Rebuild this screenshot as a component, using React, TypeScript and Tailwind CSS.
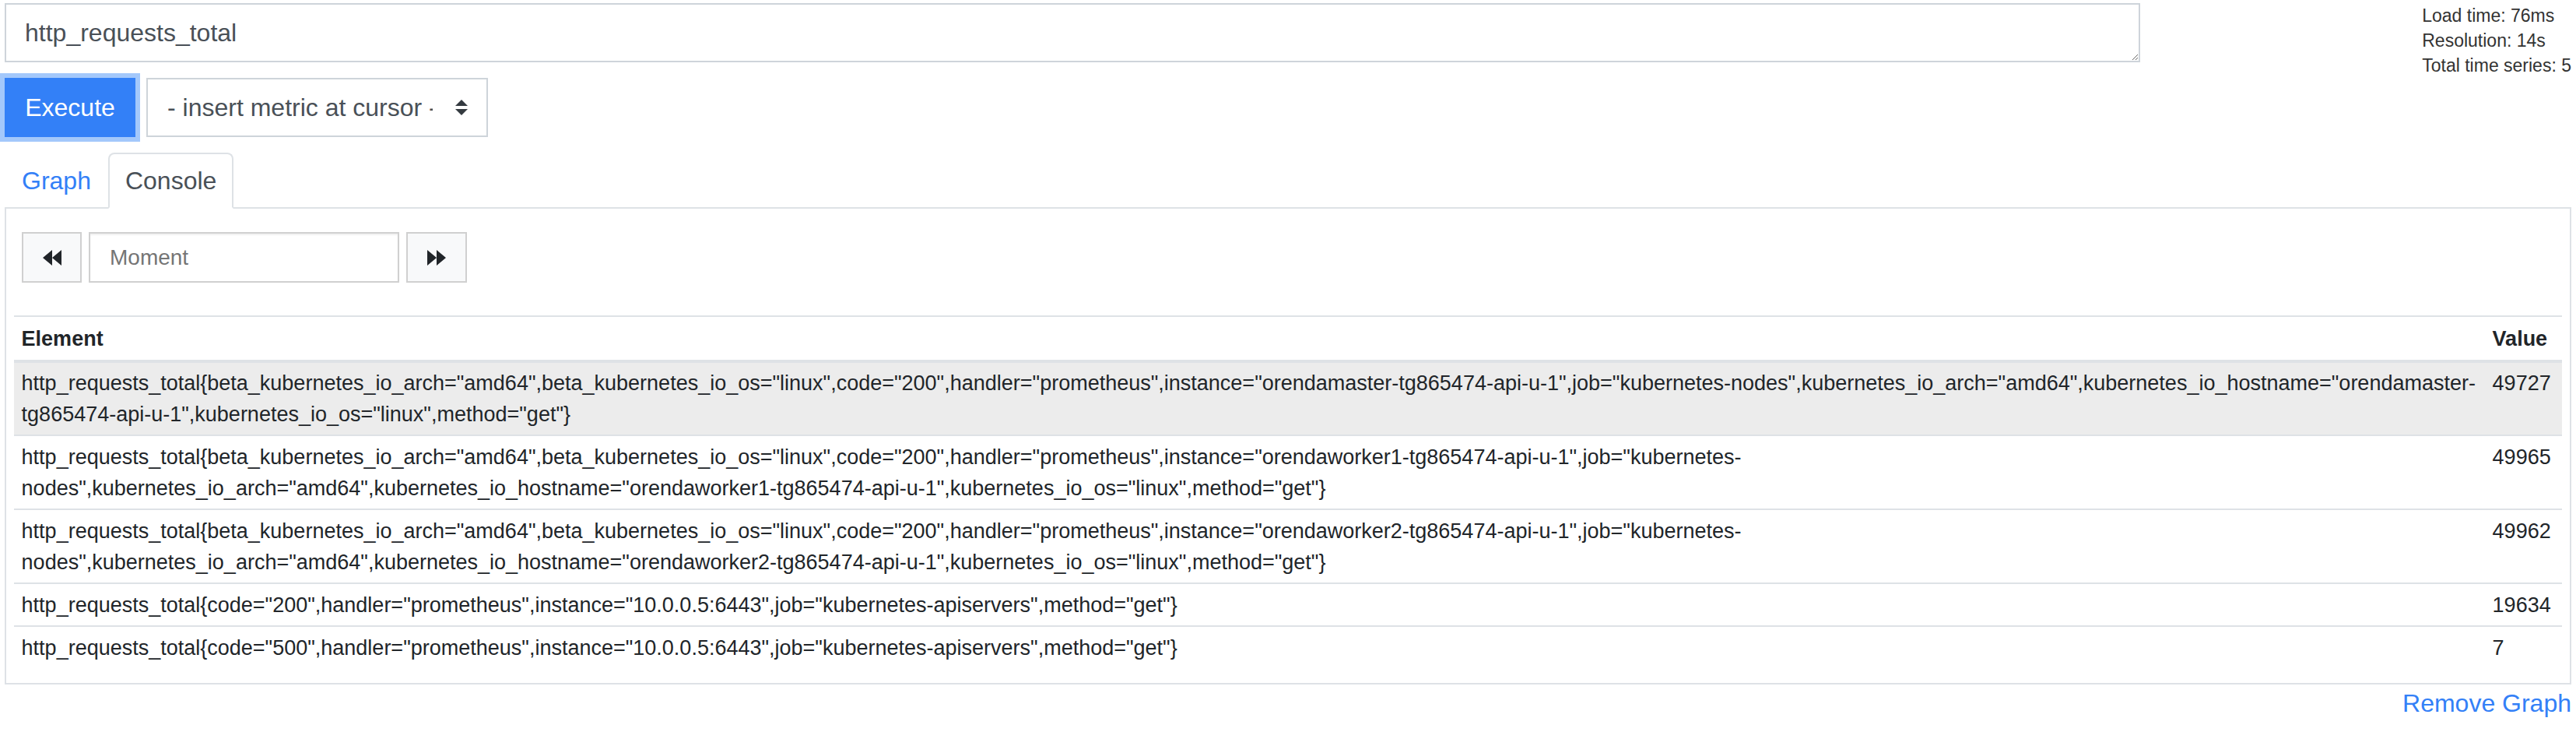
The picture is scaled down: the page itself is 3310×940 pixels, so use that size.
import React from 'react';

type Row = { lines: string[]; value: string; active?: boolean };

const rows: Row[] = [
  {
    lines: [
      'http_requests_total{beta_kubernetes_io_arch="amd64",beta_kubernetes_io_os="linux",code="200",handler="prometheus",instance="orendamaster-tg865474-api-u-1",job="kubernetes-nodes",kubernetes_io_arch="amd64",kubernetes_io_hostname="orendamaster-',
      'tg865474-api-u-1",kubernetes_io_os="linux",method="get"}',
    ],
    value: '49727',
    active: true,
  },
  {
    lines: [
      'http_requests_total{beta_kubernetes_io_arch="amd64",beta_kubernetes_io_os="linux",code="200",handler="prometheus",instance="orendaworker1-tg865474-api-u-1",job="kubernetes-',
      'nodes",kubernetes_io_arch="amd64",kubernetes_io_hostname="orendaworker1-tg865474-api-u-1",kubernetes_io_os="linux",method="get"}',
    ],
    value: '49965',
  },
  {
    lines: [
      'http_requests_total{beta_kubernetes_io_arch="amd64",beta_kubernetes_io_os="linux",code="200",handler="prometheus",instance="orendaworker2-tg865474-api-u-1",job="kubernetes-',
      'nodes",kubernetes_io_arch="amd64",kubernetes_io_hostname="orendaworker2-tg865474-api-u-1",kubernetes_io_os="linux",method="get"}',
    ],
    value: '49962',
  },
  {
    lines: ['http_requests_total{code="200",handler="prometheus",instance="10.0.0.5:6443",job="kubernetes-apiservers",method="get"}'],
    value: '19634',
  },
  {
    lines: ['http_requests_total{code="500",handler="prometheus",instance="10.0.0.5:6443",job="kubernetes-apiservers",method="get"}'],
    value: '7',
  },
];

function Backward() {
  return (
    <svg viewBox="0 0 24 20" className="w-[24px] h-[20px] fill-[#212529]">
      <path d="M12 0 0 10l12 10zM24 0 12 10l12 10z" />
    </svg>
  );
}

function Forward() {
  return (
    <svg viewBox="0 0 24 20" className="w-[24px] h-[20px] fill-[#212529]">
      <path d="M0 0l12 10L0 20zM12 0l12 10-12 10z" />
    </svg>
  );
}

export default function App() {
  return (
    <div className="min-h-[940px] bg-white px-[6px] pt-[4px] font-['Liberation_Sans',Arial,sans-serif]">
      {/* expression + stats */}
      <div className="flex items-start h-[76px]">
        <textarea
          readOnly
          value="http_requests_total"
          className="w-[2744px] h-[76px] border-2 border-[#ced4da] px-[24px] py-[12px] text-[32px] leading-[48px] text-[#495057] outline-none"
        />
        <div className="flex-1 flex justify-end">
          <div className="text-[23px] leading-[32px] text-[#333]">
            <div>Load time: 76ms</div>
            <div>Resolution: 14s</div>
            <div>Total time series: 5</div>
          </div>
        </div>
      </div>

      {/* execute row */}
      <div className="mt-[20px] flex items-center gap-[14px]">
        <button className="h-[76px] w-[168px] bg-[#3380f7] border-2 border-[#3380f7] text-white text-[32px] leading-[48px] shadow-[0_0_0_6px_#a3c8fb]">
          Execute
        </button>
        <div className="relative h-[76px] w-[439px] border-2 border-[#ced4da] bg-white flex items-center pl-[25px]">
          <span className="block w-[341px] overflow-hidden whitespace-nowrap text-[32px] leading-[48px] text-[#495057]">
            - insert metric at cursor -
          </span>
          <svg viewBox="0 0 4 5" className="absolute right-[24px] top-[26px] w-[16px] h-[20px] fill-[#343a40]">
            <path d="M2 0L0 2h4zm0 5L0 3h4z" />
          </svg>
        </div>
      </div>

      {/* tabs */}
      <div className="mt-[20px] flex border-b-2 border-[#dee2e6]">
        <a className="-mb-[2px] px-[20px] py-[10px] border-2 border-transparent text-[32px] leading-[48px] text-[#3380f7]">
          Graph
        </a>
        <a className="-mb-[2px] px-[20px] py-[10px] border-2 border-[#dee2e6] border-b-white bg-white rounded-t-[8px] text-[32px] leading-[48px] text-[#495057]">
          Console
        </a>
      </div>

      {/* console panel */}
      <div className="border-2 border-t-0 border-[#dee2e6] px-[10px] pt-[30px] pb-[19px]">
        <div className="ml-[10px] flex gap-[9px] h-[65px]">
          <button className="w-[77px] h-[65px] border-2 border-[#d0d0d0] bg-[#f8f9fa] flex items-center justify-center">
            <Backward />
          </button>
          <div className="w-[399px] h-[65px] border-2 border-[#d0d0d0] bg-white flex items-center px-[25px] shadow-[inset_0_2px_2px_rgba(0,0,0,0.06)]">
            <span className="text-[28px] text-[#757575]">Moment</span>
          </div>
          <button className="w-[78px] h-[65px] border-2 border-[#d0d0d0] bg-[#f8f9fa] flex items-center justify-center">
            <Forward />
          </button>
        </div>

        <div className="mt-[42px] text-[27px] leading-[40px] text-[#212529]">
          <div className="flex border-t-2 border-b-4 border-[#dee2e6] font-bold">
            <div className="flex-1 min-w-0 px-[9.6px] py-[7.5px]">Element</div>
            <div className="w-[99px] shrink-0 px-[9.6px] py-[7.5px]">Value</div>
          </div>
          {rows.map((row, i) => (
            <div
              key={i}
              className={row.active ? 'flex bg-[#ececec]' : 'flex border-t-2 border-[#dee2e6]'}
            >
              <div className={row.active ? 'flex-1 min-w-0 px-[9.6px] py-[6px]' : 'flex-1 min-w-0 px-[9.6px] py-[6.5px]'}>
                {row.lines.map((line, j) => (
                  <div key={j} className="whitespace-nowrap">
                    {line}
                  </div>
                ))}
              </div>
              <div className={row.active ? 'w-[99px] shrink-0 px-[9.6px] py-[6px]' : 'w-[99px] shrink-0 px-[9.6px] py-[6.5px]'}>
                {row.value}
              </div>
            </div>
          ))}
        </div>
      </div>

      <div className="text-right text-[32px] leading-[48px] text-[#3380f7]">Remove Graph</div>
    </div>
  );
}
